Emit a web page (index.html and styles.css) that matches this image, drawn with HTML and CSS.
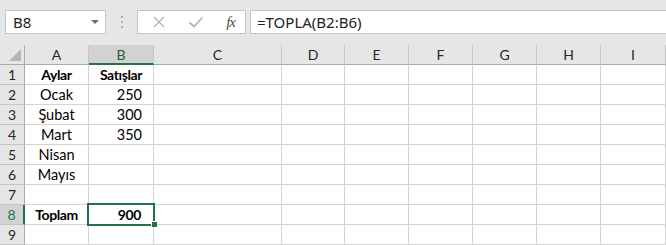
FILE: index.html
```html
<!DOCTYPE html>
<html lang="tr">
<head>
    <meta charset="UTF-8">
    <title>TOPLA</title>
    <link rel="stylesheet" href="styles.css">
</head>
<body>
    <div class="toolbar">
        <div class="name-box">
            <span>B8</span>
            <span class="arrow"></span>
        </div>
        <div class="grip"><i></i><i></i><i></i></div>
        <div class="fx-buttons">
            <svg class="icon" width="14" height="14" viewBox="0 0 14 14">
                <path d="M2 2 L12 12 M12 2 L2 12" stroke="#b4b4b4" stroke-width="1.3" fill="none"/>
            </svg>
            <svg class="icon" width="16" height="14" viewBox="0 0 16 14">
                <path d="M1.5 7.5 L6 11.5 L14.5 2.5" stroke="#b4b4b4" stroke-width="1.8" fill="none"/>
            </svg>
            <span class="fx">fx</span>
        </div>
        <div class="formula">=TOPLA(B2:B6)</div>
    </div>

    <div class="sheet">
        <div class="corner"><span class="tri"></span></div>
        <div class="col-head">A</div>
        <div class="col-head active">B</div>
        <div class="col-head">C</div>
        <div class="col-head">D</div>
        <div class="col-head">E</div>
        <div class="col-head">F</div>
        <div class="col-head">G</div>
        <div class="col-head">H</div>
        <div class="col-head">I</div>

        <div class="row-head">1</div>
        <div class="cell center bold">Aylar</div>
        <div class="cell center bold">Satışlar</div>
        <div class="cell"></div><div class="cell"></div><div class="cell"></div><div class="cell"></div><div class="cell"></div><div class="cell"></div><div class="cell"></div>

        <div class="row-head">2</div>
        <div class="cell center">Ocak</div>
        <div class="cell num">250</div>
        <div class="cell"></div><div class="cell"></div><div class="cell"></div><div class="cell"></div><div class="cell"></div><div class="cell"></div><div class="cell"></div>

        <div class="row-head">3</div>
        <div class="cell center">Şubat</div>
        <div class="cell num">300</div>
        <div class="cell"></div><div class="cell"></div><div class="cell"></div><div class="cell"></div><div class="cell"></div><div class="cell"></div><div class="cell"></div>

        <div class="row-head">4</div>
        <div class="cell center">Mart</div>
        <div class="cell num">350</div>
        <div class="cell"></div><div class="cell"></div><div class="cell"></div><div class="cell"></div><div class="cell"></div><div class="cell"></div><div class="cell"></div>

        <div class="row-head">5</div>
        <div class="cell center">Nisan</div>
        <div class="cell"></div>
        <div class="cell"></div><div class="cell"></div><div class="cell"></div><div class="cell"></div><div class="cell"></div><div class="cell"></div><div class="cell"></div>

        <div class="row-head">6</div>
        <div class="cell center">Mayıs</div>
        <div class="cell"></div>
        <div class="cell"></div><div class="cell"></div><div class="cell"></div><div class="cell"></div><div class="cell"></div><div class="cell"></div><div class="cell"></div>

        <div class="row-head">7</div>
        <div class="cell"></div>
        <div class="cell"></div>
        <div class="cell"></div><div class="cell"></div><div class="cell"></div><div class="cell"></div><div class="cell"></div><div class="cell"></div><div class="cell"></div>

        <div class="row-head active">8</div>
        <div class="cell center bold">Toplam</div>
        <div class="cell num bold selected">900</div>
        <div class="cell"></div><div class="cell"></div><div class="cell"></div><div class="cell"></div><div class="cell"></div><div class="cell"></div><div class="cell"></div>

        <div class="row-head">9</div>
        <div class="cell"></div>
        <div class="cell"></div>
        <div class="cell"></div><div class="cell"></div><div class="cell"></div><div class="cell"></div><div class="cell"></div><div class="cell"></div><div class="cell"></div>
    </div>
</body>
</html>
```

FILE: styles.css
```css
body {
    margin: 0;
    background: #e6e6e6;
    font-family: Lato, "Open Sans", sans-serif;
    color: #000;
    height: 245px;
    overflow: hidden;
}
.toolbar {
    height: 45px;
    box-sizing: border-box;
    padding: 10px 0 11px 5px;
    display: flex;
    align-items: stretch;
}
.name-box {
    width: 101px;
    box-sizing: border-box;
    background: #fff;
    border: 1px solid #c6c6c6;
    display: flex;
    align-items: center;
    justify-content: space-between;
    padding: 0 6px 0 7px;
    font-family: "Noto Sans", sans-serif;
    font-size: 15px;
    color: #222;
}
.arrow {
    width: 0;
    height: 0;
    border-left: 4px solid transparent;
    border-right: 4px solid transparent;
    border-top: 4px solid #6f6f6f;
}
.grip {
    width: 31px;
    display: flex;
    flex-direction: column;
    align-items: center;
    justify-content: center;
    gap: 3px;
}
.grip i {
    width: 2px;
    height: 2px;
    background: #b0b0b0;
}
.fx-buttons {
    width: 109px;
    box-sizing: border-box;
    background: #fff;
    border: 1px solid #c6c6c6;
    display: flex;
    align-items: center;
    padding: 0 10px 0 14px;
    justify-content: space-between;
}
.icon {
    display: block;
}
.fx {
    font-family: "Liberation Serif", serif;
    font-style: italic;
    font-size: 15px;
    color: #4a4a4a;
    letter-spacing: -1px;
}
.formula {
    flex: 1;
    margin-left: 4px;
    background: #fff;
    border: 1px solid #c6c6c6;
    border-right: none;
    display: flex;
    align-items: center;
    padding-left: 6px;
    font-family: "Noto Sans", sans-serif;
    font-size: 15px;
    color: #222;
}
.sheet {
    display: grid;
    grid-template-columns: 25px 64px 65px 128px 63px 64px 64px 64px 64px 65px;
    grid-auto-rows: 20px;
    background: #fff;
}
.sheet > div {
    box-sizing: border-box;
}
.corner {
    background: #e6e6e6;
    border-right: 1px solid #ababab;
    border-bottom: 1px solid #ababab;
    position: relative;
}
.tri {
    position: absolute;
    right: 3px;
    bottom: 3px;
    width: 0;
    height: 0;
    border-left: 12px solid transparent;
    border-bottom: 12px solid #b4b4b4;
}
.col-head {
    background: #e6e6e6;
    border-right: 1px solid #c6c6c6;
    border-bottom: 1px solid #ababab;
    text-align: center;
    font-size: 14px;
    line-height: 19px;
    color: #262626;
}
.col-head.active {
    background: #d2d2d2;
    color: #1e5b3a;
    border-bottom: 2px solid #217346;
}
.row-head {
    background: #e6e6e6;
    border-right: 1px solid #ababab;
    border-bottom: 1px solid #c6c6c6;
    text-align: center;
    font-size: 14px;
    line-height: 19px;
    color: #262626;
}
.row-head.active {
    background: #d2d2d2;
    color: #217346;
    border-right: 2px solid #217346;
}
.cell {
    border-right: 1px solid #d4d4d4;
    border-bottom: 1px solid #d4d4d4;
    font-size: 14.5px;
    line-height: 19px;
    padding: 0 3px;
    white-space: nowrap;
    overflow: hidden;
}
.center {
    text-align: center;
}
.num {
    text-align: right;
    padding-right: 11px;
}
.bold {
    font-weight: bold;
    font-size: 14px;
    letter-spacing: -0.4px;
}
.selected {
    position: relative;
    overflow: visible;
    outline: 2px solid #217346;
    outline-offset: -1px;
    margin: -1px 0 0 -1px;
    padding-top: 1px;
    padding-left: 4px;
    padding-right: 12px;
}
.selected::after {
    content: "";
    position: absolute;
    right: -4px;
    bottom: -3px;
    width: 5px;
    height: 5px;
    background: #217346;
    border-top: 1px solid #fff;
    border-left: 1px solid #fff;
}
```
